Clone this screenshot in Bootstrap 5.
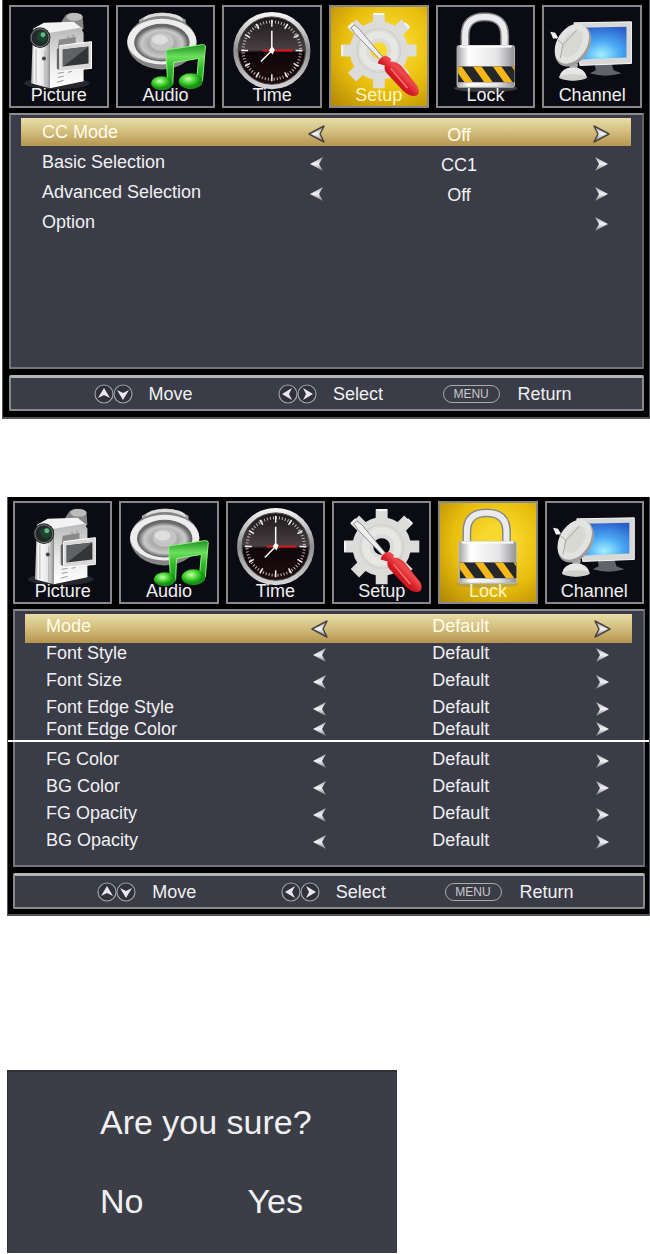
<!DOCTYPE html>
<html lang="en">
<head>
<meta charset="utf-8">
<meta name="viewport" content="width=device-width, initial-scale=1">
<title>TV setup menus</title>
<link href="https://cdn.jsdelivr.net/npm/bootstrap@5.3.0/dist/css/bootstrap.min.css" rel="stylesheet">
<style>
  body { font: 18px/24px "Liberation Sans", Arial, sans-serif; background: #fff; color: #f0f0f2; }
  button { font: inherit; color: inherit; background: none; border: 0; padding: 0; }

  .osd { background: #000; border: solid #55565c; border-width: 0 1px 2px; padding: 5px 5px 6px 6px; margin-left: 2px; }
  .osd-captions { margin: 78px 0 0 7px; padding: 4px 4px 5px 5px; }

  .tabs { display: grid; grid-template-columns: repeat(6, 1fr); gap: 7px; margin: 0 2px 5px 0; }
  .osd-captions .tabs { margin-right: 1px; }
  .tile { height: 103px; border: 2px solid #88888c; background: #0b0c13; line-height: 20px; padding-bottom: 1px; }
  .tile svg { position: absolute; inset: -2px; width: calc(100% + 4px); height: 103px; }
  .tile span { position: relative; }
  .tile.active { background: radial-gradient(circle at 60% 40%, #f7d82c 20%, #e8bd0c 55%, #a97f05 105%); color: #fff6c4; }

  .panel { background: #3a3c47; border: 2px solid #75767c; border-top-color: #8c8d93; border-right-color: #606268; padding: 3px 11px 3px 10px; min-height: 256px; }
  .osd-captions .panel { padding-bottom: 11px; }
  .option { display: grid; grid-template-columns: 1fr 18px 1fr 18px; padding: 0 21px; height: 28px; margin-bottom: 2px; line-height: 28px; }
  .option.active { background: linear-gradient(#e9dda6, #d2bd7d 50%, #b4954f); color: #fffbe9; }
  .option output { color: inherit; text-align: center; }
  .osd-main output { padding-top: 3px; }
  .step { grid-column: 2; height: 18px; margin-top: 7px; line-height: 0; }
  .step.next { grid-column: 4; }
  .step svg { display: block; width: 18px; height: 18px; }

  .osd-captions .option { height: 27px; line-height: 27px; margin: 0; }
  .osd-captions .step { margin-top: 6px; }
  .osd-captions .option.active { height: 29px; line-height: 25px; margin-bottom: -3px; }
  .osd-captions .option.short { height: 20px; line-height: 26px; }
  .osd-captions .option.tail { height: 26px; line-height: 30px; }
  .seam { height: 2px; background: #fff; opacity: 1; border: 0; margin: 0 -20px 4px; }

  .hints { display: grid; grid-template-columns: 185fr 165fr 200fr; align-items: center; height: 36px; margin-top: 6px; padding-left: 13%; background: #3a3c47; border: 2px solid #888a8c; border-top: 3px solid #b4b4b7; border-radius: 2px; }
  .keys { width: 39px; height: 20px; margin-right: 16px; }
  .menu-key { font-size: 12px; line-height: 16px; width: 57px; border: 1px solid #aaabb0; border-radius: 9px; color: #c8c8cd; margin-right: 18px; text-align: center; }

  .confirm { width: 60%; max-width: 390px; margin: 154px 0 0 7px; padding: 30px 16px 32px 92px; background: #3b3e47; border-top: 2px solid #30323a; border-left: 1px solid #2e3038; font-size: 34px; line-height: 40px; }
  .confirm p { margin: 0 0 39px; white-space: nowrap; }
  .answers { gap: 104px; }
</style>
</head>
<body>

<svg width="0" height="0" class="position-absolute" aria-hidden="true">
  <defs>
    <linearGradient id="side" x1="0" y1="0" x2="0" y2="1"><stop offset="0" stop-color="#b9b9b9"/><stop offset=".6" stop-color="#ececec"/><stop offset="1" stop-color="#fff"/></linearGradient>
    <linearGradient id="metal" x1="0" y1="0" x2="1" y2="0"><stop offset="0" stop-color="#a2a2a5"/><stop offset=".2" stop-color="#fff"/><stop offset=".7" stop-color="#e4e4e6"/><stop offset="1" stop-color="#929295"/></linearGradient>
    <linearGradient id="rim" x1="0" y1="0" x2="0" y2="1"><stop offset="0" stop-color="#fafafa"/><stop offset=".5" stop-color="#8d8d90"/><stop offset="1" stop-color="#d8d8da"/></linearGradient>
    <radialGradient id="cone"><stop offset="0" stop-color="#efefef"/><stop offset=".5" stop-color="#aaa"/><stop offset=".8" stop-color="#c9c9c9"/><stop offset="1" stop-color="#747474"/></radialGradient>
    <linearGradient id="leaf" x1="0" y1="0" x2="0" y2="1"><stop offset="0" stop-color="#1d8c22"/><stop offset=".3" stop-color="#6be05c"/><stop offset=".6" stop-color="#2eb82b"/><stop offset="1" stop-color="#22a01f"/></linearGradient>
    <radialGradient id="bulb" cx=".4" cy=".35"><stop offset="0" stop-color="#cbffad"/><stop offset=".6" stop-color="#3fd02d"/><stop offset="1" stop-color="#169114"/></radialGradient>
    <linearGradient id="dial" x1="0" y1="0" x2="0" y2="1"><stop offset="0" stop-color="#1b1719"/><stop offset=".49" stop-color="#494044"/><stop offset=".53" stop-color="#100609"/><stop offset="1" stop-color="#1f0c0e"/></linearGradient>
    <linearGradient id="grip" x1="0" y1="1" x2="1" y2="0"><stop offset="0" stop-color="#8d0710"/><stop offset=".45" stop-color="#d31a24"/><stop offset=".58" stop-color="#ee4a4c"/><stop offset="1" stop-color="#a50b15"/></linearGradient>
    <radialGradient id="sky" cx=".45" cy=".85" r=".9"><stop offset="0" stop-color="#a2efff"/><stop offset=".45" stop-color="#4ba9f5"/><stop offset="1" stop-color="#2a5fca"/></radialGradient>
    <linearGradient id="dart" x1="0" y1="0" x2="0" y2="1"><stop offset="0" stop-color="#a9a9ad"/><stop offset=".5" stop-color="#f4f4f6"/><stop offset="1" stop-color="#77787f"/></linearGradient>
    <clipPath id="band"><rect x="22" y="62" width="57" height="16"/></clipPath>
  </defs>

  <symbol id="i-picture" viewBox="0 0 100 104">
    <ellipse cx="48" cy="79" rx="33" ry="6" fill="#777" opacity=".25"/>
    <path d="M52 18l5-8q8-5 17 1l1 13-8 6z" fill="#878787"/><ellipse cx="66" cy="12" rx="8" ry="4" fill="#bcbcbc"/>
    <path d="M24 24l11-6 30-1 9 7-33 5z" fill="#f3f3f3"/>
    <path d="M24 24l17 4v56l-19-5z" fill="url(#metal)"/>
    <path d="M41 28l31-5 3 5v49l-34 7z" fill="url(#side)"/>
    <path d="M27 44v35M36 46v36" stroke="#aaa" fill="none"/>
    <path d="M50 35l17-3v6l-18 5z" fill="#8a8a8a"/><path d="M59 32h1M64 31h1" stroke="#555"/>
    <circle cx="31" cy="33" r="10.500" fill="#24282a"/><circle cx="31" cy="33" r="9" fill="none" stroke="#777"/>
    <circle cx="33" cy="32" r="5.500" fill="#17452d"/><circle cx="34" cy="30" r="2.500" fill="#67b487"/>
    <circle cx="35" cy="54" r="2" fill="#444"/>
    <path d="M48 45l4-4v26l-4-3z" fill="#666"/><path d="M51 41l32-4v27l-32 3z" fill="#d9d9d9" stroke="#fff"/>
    <path d="M54 45l26-3v17l-26 3z" fill="#333537"/><path d="M54 45l26-3-24 19-2 1z" fill="#606365"/>
    <path d="M49 69l6-1M49 73l6-1M48 78l7-2M59 68l4-1" stroke="#999"/>
  </symbol>

  <symbol id="i-audio" viewBox="0 0 100 104">
    <path d="M23 26V15q23-15 47 0v12z" fill="#a4a4a4"/><ellipse cx="47" cy="15" rx="20" ry="7" fill="#dedede"/><ellipse cx="47" cy="15" rx="11" ry="4" fill="#a9a9a9"/>
    <ellipse cx="46" cy="38" rx="35" ry="27" fill="#858585"/><ellipse cx="46" cy="37" rx="35" ry="23" fill="#ededed"/>
    <ellipse cx="46" cy="38" rx="28" ry="19" fill="#686868"/><ellipse cx="46" cy="39" rx="26" ry="17" fill="url(#cone)"/>
    <ellipse cx="46" cy="37" rx="12" ry="9" fill="#c5c5c5"/><ellipse cx="44" cy="35" rx="8" ry="5" fill="#dedede"/>
    <path d="M50 47q1-2 3-2l34-5q3 0 3 2l-3 35h-6l2-23-25 4-1 22h-5z" fill="url(#leaf)" stroke="#8df377"/>
    <ellipse cx="46" cy="79" rx="11" ry="7" fill="url(#bulb)"/><ellipse cx="75" cy="77" rx="12" ry="8" fill="url(#bulb)"/>
  </symbol>

  <symbol id="i-time" viewBox="0 0 100 104">
    <circle cx="50" cy="46" r="39" fill="url(#rim)"/><circle cx="50" cy="46" r="34" fill="url(#dial)" stroke="#444"/>
    <circle cx="50" cy="46" r="29" fill="none" stroke="#bbb" stroke-width="3" stroke-dasharray="1 2.037"/>
    <g stroke="#eee" stroke-width="1.500"><path d="M50 15v7M50 70v7M19 46h7M74 46h7M34 19l3 5M63 68l3 5M77 30l-5 3M28 59l-5 3M66 19l-3 5M37 68l-3 5M23 30l5 3M72 59l5 3"/></g>
    <path d="M41 45h30v2H41z" fill="#e2151c"/><path d="M50 26v20L39 57" fill="none" stroke="#fff" stroke-width="1.500"/><path d="M47 46l3-4 3 3-2 5z" fill="#fff"/>
  </symbol>

  <symbol id="i-setup" viewBox="0 0 100 104">
    <g fill="none" stroke="#dcdcda">
      <circle cx="50" cy="46" r="19" stroke-width="21"/>
      <path d="M50 8v14M50 70v14M12 46h14M74 46h14M23 19l11 11M66 62l11 11M77 19L66 30M34 62L23 73" stroke-width="12"/>
    </g>
    <circle cx="50" cy="46" r="22" fill="none" stroke="#cacaca"/><circle cx="50" cy="46" r="16" fill="none" stroke="#eee" stroke-width="7" opacity=".6"/>
    <path d="M45 9h10M24 18l-5 5M76 18l5 5M13 41v10" stroke="#f7f7f7" stroke-width="2"/>
    <path d="M22 23l3-3 5 4 26 31-3 2-27-28z" fill="#eee" stroke="#777" stroke-width=".8"/>
    <path d="M49 59q1-6 8-8l5 3v3q7 0 12 6l15 19q4 9-3 10-6 0-12-6L58 69q-3-4-2-8z" fill="url(#grip)"/><path d="M62 64l17 20" stroke="#f57775" stroke-width="1.500"/>
  </symbol>

  <symbol id="i-lock" viewBox="0 0 100 104">
    <ellipse cx="50" cy="84" rx="32" ry="4" fill="#888" opacity=".4"/>
    <path d="M29 43V31Q29 12 49 12t20 19v12" fill="none" stroke="#88888b" stroke-width="9"/>
    <path d="M29 43V31Q29 12 49 12t20 19v12" fill="none" stroke="#ebebed" stroke-width="6"/>
    <rect x="21" y="41" width="58" height="42" rx="2" fill="url(#metal)" stroke="#bbb"/>
    <path d="M24 42h52" stroke="#fff" stroke-width="2"/>
    <rect x="22" y="62" width="57" height="16" fill="#26272a"/>
    <g clip-path="url(#band)" stroke="#f6b719" stroke-width="7"><path d="M17 56l20 28M37 56l20 28M57 56l20 28M76 56l20 28"/></g>
  </symbol>

  <symbol id="i-channel" viewBox="0 0 100 104">
    <path d="M53 59h17l2 7 8 3q-16 5-32 0l6-3z" fill="#5f6469"/>
    <path d="M32 18l58-1v42l-52 2z" fill="#d8d8d6" stroke="#f7f7f7"/><path d="M39 23l46-1v31l-46 2z" fill="url(#sky)"/>
    <path d="M27 59h9l-1 9h-7z" fill="#aaa"/><path d="M17 73q2-10 14-10t14 10q-14 7-28 0z" fill="#e6e6e4"/><ellipse cx="31" cy="73" rx="14" ry="3" fill="#d0d0ce"/>
    <g transform="rotate(33 31 41)"><ellipse cx="31" cy="41" rx="16" ry="23" fill="#9e9e9d"/><ellipse cx="29" cy="40" rx="15" ry="22" fill="#e3e3e1"/><ellipse cx="29" cy="40" rx="9" ry="15" fill="#d8d8d6"/></g>
    <path d="M10 30l11 10-3 14M21 40l14-15" fill="none" stroke="#a5a5a5"/><path d="M8 27l5 1 3 5-5 1z" fill="#f5f5f5"/>
  </symbol>

  <symbol id="i-prev" viewBox="0 0 18 18"><path d="M2 9l13-7-4 7 4 7z" fill="url(#dart)"/></symbol>
  <symbol id="i-next" viewBox="0 0 18 18"><path d="M16 9L3 2l4 7-4 7z" fill="url(#dart)"/></symbol>
  <symbol id="i-prev-on" viewBox="0 0 18 18"><path d="M1 9l15-8-4 8 4 8z" fill="url(#dart)" stroke="#4a443f" stroke-width="1.500" stroke-linejoin="round"/></symbol>
  <symbol id="i-next-on" viewBox="0 0 18 18"><path d="M17 9L2 1l4 8-4 8z" fill="url(#dart)" stroke="#4a443f" stroke-width="1.500" stroke-linejoin="round"/></symbol>
  <symbol id="i-updown" viewBox="0 0 39 20">
    <g fill="#30313a" stroke="#a0a1a7" stroke-width="1.200"><circle cx="10" cy="10" r="9"/><circle cx="29" cy="10" r="9"/></g>
    <path d="M10 4l6 10-6-3-6 3zM29 16l-6-10 6 3 6-3z" fill="#e8e8ec"/>
  </symbol>
  <symbol id="i-leftright" viewBox="0 0 39 20">
    <g fill="#30313a" stroke="#a0a1a7" stroke-width="1.200"><circle cx="10" cy="10" r="9"/><circle cx="29" cy="10" r="9"/></g>
    <path d="M4 10l10-6-3 6 3 6zM35 10l-10-6 3 6-3 6z" fill="#e8e8ec"/>
  </symbol>
</svg>

<section class="osd osd-main" aria-label="Closed caption menu">
  <nav class="tabs">
    <button class="tile position-relative d-flex align-items-end justify-content-center"><svg><use href="#i-picture"/></svg><span>Picture</span></button>
    <button class="tile position-relative d-flex align-items-end justify-content-center"><svg><use href="#i-audio"/></svg><span>Audio</span></button>
    <button class="tile position-relative d-flex align-items-end justify-content-center"><svg><use href="#i-time"/></svg><span>Time</span></button>
    <button class="tile active position-relative d-flex align-items-end justify-content-center"><svg><use href="#i-setup"/></svg><span>Setup</span></button>
    <button class="tile position-relative d-flex align-items-end justify-content-center"><svg><use href="#i-lock"/></svg><span>Lock</span></button>
    <button class="tile position-relative d-flex align-items-end justify-content-center"><svg><use href="#i-channel"/></svg><span>Channel</span></button>
  </nav>
  <div class="panel">
    <div class="option active"><span>CC Mode</span><button class="step" aria-label="Previous"><svg><use href="#i-prev-on"/></svg></button><output>Off</output><button class="step next" aria-label="Next"><svg><use href="#i-next-on"/></svg></button></div>
    <div class="option"><span>Basic Selection</span><button class="step" aria-label="Previous"><svg><use href="#i-prev"/></svg></button><output>CC1</output><button class="step next" aria-label="Next"><svg><use href="#i-next"/></svg></button></div>
    <div class="option"><span>Advanced Selection</span><button class="step" aria-label="Previous"><svg><use href="#i-prev"/></svg></button><output>Off</output><button class="step next" aria-label="Next"><svg><use href="#i-next"/></svg></button></div>
    <div class="option"><span>Option</span><button class="step next" aria-label="Open"><svg><use href="#i-next"/></svg></button></div>
  </div>
  <footer class="hints">
    <div class="d-flex align-items-center"><svg class="keys"><use href="#i-updown"/></svg>Move</div>
    <div class="d-flex align-items-center"><svg class="keys"><use href="#i-leftright"/></svg>Select</div>
    <div class="d-flex align-items-center"><span class="menu-key">MENU</span>Return</div>
  </footer>
</section>

<section class="osd osd-captions overflow-hidden" aria-label="Caption style menu">
  <nav class="tabs">
    <button class="tile position-relative d-flex align-items-end justify-content-center"><svg><use href="#i-picture"/></svg><span>Picture</span></button>
    <button class="tile position-relative d-flex align-items-end justify-content-center"><svg><use href="#i-audio"/></svg><span>Audio</span></button>
    <button class="tile position-relative d-flex align-items-end justify-content-center"><svg><use href="#i-time"/></svg><span>Time</span></button>
    <button class="tile position-relative d-flex align-items-end justify-content-center"><svg><use href="#i-setup"/></svg><span>Setup</span></button>
    <button class="tile active position-relative d-flex align-items-end justify-content-center"><svg><use href="#i-lock"/></svg><span>Lock</span></button>
    <button class="tile position-relative d-flex align-items-end justify-content-center"><svg><use href="#i-channel"/></svg><span>Channel</span></button>
  </nav>
  <div class="panel">
    <div class="option active"><span>Mode</span><button class="step" aria-label="Previous"><svg><use href="#i-prev-on"/></svg></button><output>Default</output><button class="step next" aria-label="Next"><svg><use href="#i-next-on"/></svg></button></div>
    <div class="option"><span>Font Style</span><button class="step" aria-label="Previous"><svg><use href="#i-prev"/></svg></button><output>Default</output><button class="step next" aria-label="Next"><svg><use href="#i-next"/></svg></button></div>
    <div class="option"><span>Font Size</span><button class="step" aria-label="Previous"><svg><use href="#i-prev"/></svg></button><output>Default</output><button class="step next" aria-label="Next"><svg><use href="#i-next"/></svg></button></div>
    <div class="option short"><span>Font Edge Style</span><button class="step" aria-label="Previous"><svg><use href="#i-prev"/></svg></button><output>Default</output><button class="step next" aria-label="Next"><svg><use href="#i-next"/></svg></button></div>
    <div class="option tail"><span>Font Edge Color</span><button class="step" aria-label="Previous"><svg><use href="#i-prev"/></svg></button><output>Default</output><button class="step next" aria-label="Next"><svg><use href="#i-next"/></svg></button></div>
    <hr class="seam">
    <div class="option"><span>FG Color</span><button class="step" aria-label="Previous"><svg><use href="#i-prev"/></svg></button><output>Default</output><button class="step next" aria-label="Next"><svg><use href="#i-next"/></svg></button></div>
    <div class="option"><span>BG Color</span><button class="step" aria-label="Previous"><svg><use href="#i-prev"/></svg></button><output>Default</output><button class="step next" aria-label="Next"><svg><use href="#i-next"/></svg></button></div>
    <div class="option"><span>FG Opacity</span><button class="step" aria-label="Previous"><svg><use href="#i-prev"/></svg></button><output>Default</output><button class="step next" aria-label="Next"><svg><use href="#i-next"/></svg></button></div>
    <div class="option"><span>BG Opacity</span><button class="step" aria-label="Previous"><svg><use href="#i-prev"/></svg></button><output>Default</output><button class="step next" aria-label="Next"><svg><use href="#i-next"/></svg></button></div>
  </div>
  <footer class="hints">
    <div class="d-flex align-items-center"><svg class="keys"><use href="#i-updown"/></svg>Move</div>
    <div class="d-flex align-items-center"><svg class="keys"><use href="#i-leftright"/></svg>Select</div>
    <div class="d-flex align-items-center"><span class="menu-key">MENU</span>Return</div>
  </footer>
</section>

<section class="confirm" role="dialog" aria-label="Confirmation">
  <p>Are you sure?</p>
  <div class="answers d-flex"><button>No</button><button>Yes</button></div>
</section>

<script src="https://cdn.jsdelivr.net/npm/bootstrap@5.3.0/dist/js/bootstrap.bundle.min.js"></script>
</body>
</html>
